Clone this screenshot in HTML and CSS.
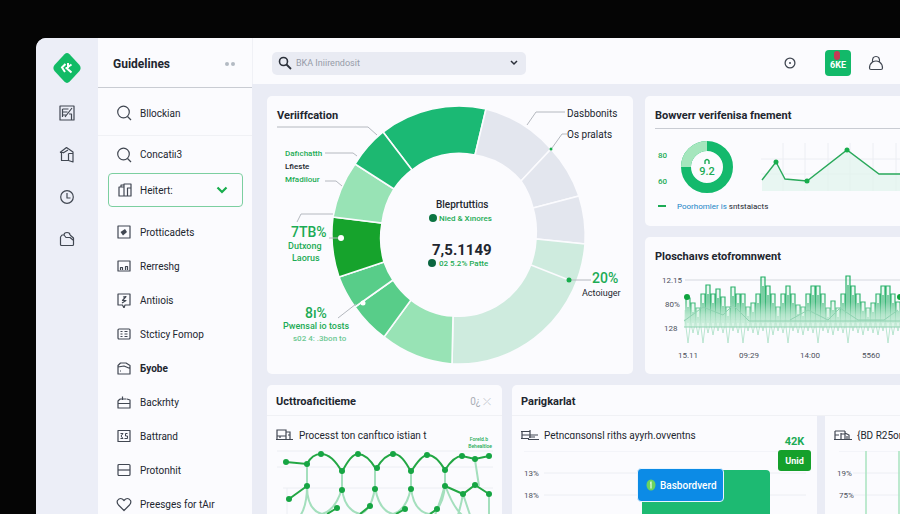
FILE: index.html
```html
<!DOCTYPE html>
<html lang="en">
<head>
  <meta charset="UTF-8">
  <meta name="viewport" content="width=device-width, initial-scale=1.0">
  <title>Guidelines</title>
  <link rel="stylesheet" href="styles.css">
</head>
<body>
  <div class="app">
    <!-- Icon rail -->
    <nav class="rail" aria-label="Main">
      <a class="logo" href="#" aria-label="Home">
        <svg width="30" height="32" viewBox="0 0 30 32"><path d="M12.500 2.200q2.500-2.200 5 0l10 10.800q2.200 3 0 6l-10 10.800q-2.500 2.200-5 0l-10-10.800q-2.200-3 0-6z" fill="#12bb66"/><path d="M13.500 12L10 15.500l3 4.500M19.500 12.500l-5 3.500 5 4.500M16 11v5" fill="none" stroke="#fff" stroke-width="2"/></svg>
      </a>
      <a href="#" aria-label="Notes"><svg class="icon" viewBox="0 0 16 16"><path d="M1 1h14v14H1zM3.500 4h6M3.500 7h5M3.500 10h4M3.500 4v8M13 3L6 12M10 9h2.500v6"/></svg></a>
      <a href="#" aria-label="Packages"><svg class="icon" viewBox="0 0 16 16"><path d="M1 5.500L7.500.5 14 5v10l-4.500-1.500h-7v-8M1 5.500h4M4 6l5-3M9.500 6.500v7M9.500 6.500H14"/></svg></a>
      <a href="#" aria-label="History"><svg class="icon" viewBox="0 0 16 16"><circle cx="8" cy="8" r="6.300"/><path d="M8 4v5h3.500"/></svg></a>
      <a href="#" aria-label="Files"><svg class="icon" viewBox="0 0 16 16"><path d="M5 4H3L1.500 6v7.500q0 1 1 1h11q1 0 1-1V7L11 4M5 4q0-2.500 3-2.500T11 4M5 4l2 2.500h4l3 2.500"/></svg></a>
    </nav>

    <!-- Sidebar -->
    <aside class="sidebar">
      <div class="sidebar-head">
        <h1>Guidelines</h1>
        <button class="more" aria-label="More"><i></i><i></i></button>
      </div>
      <nav class="menu" aria-label="Guidelines">
        <a class="tall" href="#"><svg class="icon" viewBox="0 0 16 16"><circle cx="7.500" cy="7" r="5.800"/><path d="M11.500 11.500L15 15"/></svg>Bllockian</a>
        <a class="mid" href="#"><svg class="icon" viewBox="0 0 16 16"><circle cx="7.500" cy="7" r="5.800"/><path d="M11.500 11.500L15 15"/></svg>Concatiı3</a>
        <div class="picker">
          <svg class="icon" viewBox="0 0 16 16"><path d="M2 5h5v9H2zM7 5V2h7v12H7M10.500 14V6H14M4 5V3h3"/></svg>
          <select aria-label="Section"><option>Heitert:</option></select>
          <svg class="picker-arrow" width="12" height="8" viewBox="0 0 12 8"><path d="M1.500 1.500L6 6l4.500-4.500" fill="none" stroke="#17ad4c" stroke-width="2.200"/></svg>
        </div>
        <a href="#"><svg class="icon" viewBox="0 0 16 16"><path d="M2 2h12v12H2z"/><path d="M4.500 8L9 5l2 3-4 3.500z" fill="#414752" stroke="none"/></svg>Protticadets</a>
        <a href="#"><svg class="icon" viewBox="0 0 16 16"><path d="M2 3h12v10H2zM4.500 12V9.500h2V12M9.500 12V8.500h2V12"/></svg>Rerreshg</a>
        <a href="#"><svg class="icon" viewBox="0 0 16 16"><path d="M2 2h12v11H9l-1 3-1.500-3H2zM7 5l3-.5-3.500 4H10L6 11"/></svg>Antiıois</a>
        <a href="#"><svg class="icon" viewBox="0 0 16 16"><rect x="2" y="3" width="12" height="10" rx="1"/><path d="M4.500 5.500h2M8.500 5.500h3M4.500 8h2M8.500 8h3M4.500 10.500h2M8.500 10.500h3"/></svg>Stcticy Fomop</a>
        <a class="strong" href="#"><svg class="icon" viewBox="0 0 16 16"><path d="M2 5.500V14h12V5.500L10 3H4.500zM2 7l6-1 6 2.500M4 11h1"/></svg>Бyobe</a>
        <a href="#"><svg class="icon" viewBox="0 0 16 16"><path d="M4 5L2 7v7h12V6l-3-1M2 9.500h12M6.500 6V2.500M4 5h6.500"/></svg>Backrhty</a>
        <a href="#"><svg class="icon" viewBox="0 0 16 16"><path d="M2 2.500h12v11H2z"/><path d="M4.500 5.500H7L5 8l2 2.500H4.500M11.500 5.500H9.500V8h2v2.500h-3" stroke-width="1"/></svg>Battrand</a>
        <a href="#"><svg class="icon" viewBox="0 0 16 16"><rect x="2" y="2.500" width="12" height="11" rx="1"/><path d="M2 8h12"/></svg>Protonhit</a>
        <a href="#"><svg class="icon" viewBox="0 0 16 16"><path d="M8 14.500L2.500 9Q.5 6.500 1.500 4.500 4.500.5 8 4.500q3.500-4 6.500 0 1 2-1 4.500z"/></svg>Preesges for tAır</a>
      </nav>
    </aside>

    <main class="main">
      <header class="topbar">
        <div class="search">
          <svg width="14" height="14" viewBox="0 0 14 14"><circle cx="5.500" cy="5.500" r="4" fill="none" stroke="#2b303a" stroke-width="1.600"/><path d="M8.500 8.500l4.500 4.500" stroke="#2b303a" stroke-width="1.800"/></svg>
          <input type="text" placeholder="BKA Iniirendosit" aria-label="Search">
          <button aria-label="Search options"><svg width="8" height="6" viewBox="0 0 8 6"><path d="M1 1l3 3 3-3" fill="none" stroke="#2b303a" stroke-width="1.500"/></svg></button>
        </div>
        <button class="status" aria-label="Status"><svg width="12" height="12" viewBox="0 0 12 12"><circle cx="6" cy="6" r="4.900" fill="none" stroke="#414752" stroke-width="1.300"/><path d="M5 6h2" stroke="#414752" stroke-width="1.300"/></svg></button>
        <button class="account">6KE<i></i></button>
        <button class="profile" aria-label="Profile"><svg class="icon" viewBox="0 0 16 16"><path d="M4.500 7Q4 1.500 8 1.500T11.500 7M4.500 7q2-1 3.500-1t3.500 1M4.500 7Q1.500 9 1.500 13q0 1.500 1.500 1.500h10q1.500 0 1.500-1.500 0-4-3-6"/></svg></button>
      </header>

      <div class="content">
        <div class="row row-top">
          <section class="card verify">
            <h2>Veriiffcation</h2>
            <svg class="chart" viewBox="0 0 366 278">
              <!-- Donut segments, clockwise from the top -->
              <g stroke="#fbfbfe" stroke-width="1.600">
                <path fill="#1bb974" d="M116 36A127 130 0 0 1 219 13L208 59A77 81 0 0 0 145 74z"/>
                <path fill="#e3e6ee" d="M219 13A127 130 0 0 1 284 53L254 85A77 81 0 0 0 208 59z"/>
                <path fill="#e3e6ee" d="M284 53A127 130 0 0 1 312 100L266 112A77 81 0 0 0 254 85z"/>
                <path fill="#e3e6ee" d="M312 100A127 130 0 0 1 318 148L269 143A77 81 0 0 0 266 112z"/>
                <path fill="#ceebde" d="M318 148A127 130 0 0 1 185 268L186 220A77 81 0 0 0 269 143z"/>
                <path fill="#98e3b5" d="M185 268A127 130 0 0 1 117 241L144 204A77 81 0 0 0 186 220z"/>
                <path fill="#58cd89" d="M117 241A127 130 0 0 1 88 211L126 184A77 81 0 0 0 144 204z"/>
                <path fill="#58cd89" d="M88 211A127 130 0 0 1 72 181L117 166A77 81 0 0 0 126 184z"/>
                <path fill="#16a32c" d="M72 181A127 130 0 0 1 66 121L115 127A77 81 0 0 0 117 166z"/>
                <path fill="#98e3b5" d="M66 121A127 130 0 0 1 88 68L127 93A77 81 0 0 0 115 127z"/>
                <path fill="#1db871" d="M88 68A127 130 0 0 1 116 36L145 74A77 81 0 0 0 127 93z"/>
                <path d="M264 169l38 15"/>
              </g>
              <!-- Leader lines -->
              <path class="leader" d="M10 31h91l9 8M58 57h28l4 3M58 85h11l6 5M30 126l4-8h32M62 142h11M71 222l18-14M260 29l9-13h29M285 52l10-14h5M302 184h22"/>
              <circle cx="74" cy="142" r="3" fill="#fff"/>
              <circle cx="96" cy="207" r="2.500" fill="#fff"/>
              <circle cx="284" cy="53" r="1.500" fill="#17ad4c"/>
              <circle cx="302" cy="184" r="2.500" fill="#17ad4c"/>
              <g class="green bold" font-size="8">
                <text x="18" y="60">Dafıchatth</text>
                <text class="dark" x="18" y="73">Lfieste</text>
                <text x="18" y="86">Mfadilour</text>
                <text class="big" x="24" y="141">7TB%</text>
                <text x="21" y="153" font-size="9">Dutxong</text>
                <text x="25" y="165" font-size="9">Laorus</text>
                <text class="big" x="38" y="222">8ı%</text>
                <text x="16" y="233" font-size="9">Pwensal io tosts</text>
                <text class="pale" x="26" y="245">s02 4: .3bon to</text>
                <text class="big" x="325" y="187">20%</text>
              </g>
              <g class="dark" font-size="10">
                <text x="300" y="21">Dasbbonits</text>
                <text x="300" y="42">Os pralats</text>
                <text x="315" y="200" font-size="9">Actoiuger</text>
              </g>
              <!-- Centre totals -->
              <text class="dark bold" x="169" y="112" font-size="10">Bleprtuttiɑs</text>
              <text class="green bold" x="172" y="125" font-size="8">Nied &amp; Xınores</text>
              <text class="dark total" x="165" y="159">7,5.1149</text>
              <text class="green bold" x="172" y="170" font-size="8">02 5.2% Patte</text>
              <circle cx="166" cy="122" r="4" fill="#0b7442"/>
              <circle cx="165" cy="167" r="4" fill="#0b6540"/>
            </svg>
          </section>

          <div class="stack">
            <section class="card bleed">
              <h2 class="ruled">Bowverr verifenisa fnement</h2>
              <svg class="chart" viewBox="0 0 255 66">
                <path class="grid" d="M138 14v48M160 14v48M183 14v48M205 14v48M228 14v48M251 14v48M116 30h139M116 45h139"/>
                <path fill="#dff3ec" fill-opacity=".7" d="M117 51l14-18 9 17 22 2 40-31 32 24h21v17H117z"/>
                <path fill="none" stroke="#2aa95b" stroke-width="1.400" d="M117 51l14-18 9 17 22 2 40-31 32 24h21"/>
                <g fill="#17ad4c"><circle cx="131" cy="33" r="2.500"/><circle cx="162" cy="52" r="2.500"/><circle cx="202" cy="21" r="2.500"/></g>
                <circle cx="62" cy="38" r="21" fill="none" stroke="#14b96c" stroke-width="10"/>
                <path d="M41 38A21 21 0 0 1 62 17" fill="none" stroke="#a5e6bd" stroke-width="10"/>
                <g class="green bold" font-size="8">
                  <text x="13" y="29">80</text>
                  <text x="13" y="55">60</text>
                </g>
                <path d="M60 35v-3q2-3 4 0v3" fill="none" stroke="#1cab55" stroke-width="1.400"/>
                <text class="green bold" x="62" y="46" text-anchor="middle" font-size="11">9.2</text>
              </svg>
              <p class="legend"><i></i><a href="#">Poorhomler is</a>&nbsp;sntstaiacts</p>
            </section>

            <section class="card bleed">
              <h2>Ploschaıvs etofromnwent</h2>
              <svg class="chart" viewBox="0 4 255 105">
                <path class="grid line" d="M40 15h215"/>
                <g id="load"></g>
                <circle cx="42" cy="32" r="3" fill="#0fa33e"/>
                <circle cx="255" cy="32" r="3" fill="#0fa33e"/>
                <g class="axis">
                  <text x="17" y="18">12.15</text>
                  <text x="20" y="42">80%</text>
                  <text x="19" y="66">128</text>
                  <text x="33" y="93">15.11</text>
                  <text x="94" y="93">09:29</text>
                  <text x="155" y="93">14:00</text>
                  <text x="217" y="93">5560</text>
                </g>
              </svg>
            </section>
          </div>
        </div>

        <div class="row row-bottom">
          <section class="card flow">
            <div class="card-head">
              <h2>Ucttroafıcitieme</h2>
              <span class="meta">0¿ ⤫</span>
            </div>
            <h3><svg width="18" height="12" viewBox="0 0 18 12"><path d="M1 10V1h9v9M1 7h9M4 7v2M10 3h4v7M12 6h2M0 10.500h17"/></svg>Processt ton canftıco istian t</h3>
            <svg class="chart" viewBox="0 3 235 80">
              <path class="grid" d="M10 3h216M10 19h216M16 40h210M20 40v30"/>
              <path d="M40 16v22q0 24 15 28 14-4 20-26V23M40 38q0 20-7 30M75 40q2 22 18 26 12-4 15-27V20M108 39q4 24 18 27 14-4 18-27V23M144 39q2 24 18 27 14-4 16-29V22M178 37q-4 15-10 30M208 12l4 26M178 37q8 22 17 30M196 46q-2 12-6 24M196 46q4 12 8 24M222 46v24" fill="none" stroke="#a4dfbd" stroke-width="2"/>
              <path d="M19 14l21 2Q45 6 54 6 65 6 75 24 84 6 91 6q9 0 18 15Q118 6 127 6q8 0 17 18Q154 7 161 7q8 0 17 15 9-14 17-14l13 3 14-3M22 51l18-13M178 38l18 8 12-9 14 9M60 66l10-6M93 66l10-8M129 66l9-5M163 66l7-5" fill="none" stroke="#23a744" stroke-width="2"/>
              <g id="flow-dots" fill="#16a543"></g>
              <g class="tiny green bold" text-anchor="end"><text x="221" y="-7">Foreld.b</text><text x="225" y="0">Behealtloe</text></g>
            </svg>
          </section>

          <section class="group">
            <div class="card-head">
              <h2>Parigkarlat</h2>
            </div>
            <div class="panels">
              <div class="panel">
                <h3><svg width="18" height="12" viewBox="0 0 18 12"><path d="M0 2.500h9M1 2v7M1 6h16M9 1v8M0 9.500h8M8 8h6M7 10.500h11"/></svg>Petncɑnsonsl riths ayyrh.ovventns</h3>
                <svg class="chart" viewBox="0 0 305 80">
                  <path class="grid" d="M12 0h282M32 22h262M32 44h262"/>
                  <path fill="#1dba72" d="M130 80V19h124q4 0 4 4v57z"/>
                  <g class="axis"><text x="12" y="25">13%</text><text x="12" y="47">18%</text></g>
                </svg>
                <button class="tip"><svg width="10" height="12" viewBox="0 0 10 12"><ellipse cx="5" cy="6" rx="4.500" ry="5.500" fill="#6bd35f"/><path d="M5 2.500v7M4 4h1" stroke="#e7ffe8" stroke-width="1.200"/></svg>Basbordverd</button>
                <div class="badge"><span>42K</span><button>Unid</button></div>
              </div>
              <div class="panel side">
                <h3><svg width="18" height="12" viewBox="0 0 18 12"><path d="M1 2h10M1 2v8M1 6h4M7 4v6M7 5h4M11 2v8M11 4l4 2v4M0 10.500h18M13 7v3"/></svg>{BD R25on</h3>
                <svg class="chart" viewBox="0 0 75 80">
                  <path class="grid" d="M14 0h61M28 22h47M28 44h47"/>
                  <path d="M41 0v80M74 0v80" stroke="#a9e3c0" stroke-width="1.500"/>
                  <g class="axis"><text x="12" y="25">19%</text><text x="14" y="47">75%</text></g>
                </svg>
              </div>
            </div>
          </section>
        </div>
      </div>
    </main>
  </div>

  <script>
    // Top of each column in the load chart, left to right
    const tops = [33, 38, 43, 29, 20, 29, 24, 32, 42, 22, 29, 29, 42, 38, 29, 12, 21, 29, 42,
      29, 21, 29, 40, 42, 29, 21, 21, 29, 43, 36, 43, 29, 11, 21, 29, 37, 43, 38, 29, 21, 21, 29, 37, 36];
    // Columns that run down into a spike
    const spikes = [0, 3, 8, 11, 16, 20, 26, 32, 40];
    let bars = '';
    let down = '';
    tops.forEach(function (top, i) {
      const x = 41 + i * 5;
      bars += 'M' + x + ' 62V' + top + 'h4V62M' + (x + 2) + ' ' + (top + 9) + 'V58';
      const end = spikes.includes(i) ? 78 : 66 + (i % 3) * 2;
      down += 'M' + (x - 1) + ' 54L' + (x + 2) + ' ' + end + 'L' + (x + 5) + ' 54';
    });
    document.getElementById('load').innerHTML =
      '<linearGradient id="fade" gradientUnits="userSpaceOnUse" x1="0" y1="12" x2="0" y2="62">' +
      '<stop offset="0" stop-color="#1fae63"/><stop offset=".5" stop-color="#3bb777"/><stop offset=".75" stop-color="#9adbb9"/><stop offset="1" stop-color="#d0efdf"/></linearGradient>' +
      '<path d="M39 45h216v17H39z" fill="#e2f6ec"/>' +
      '<path d="' + down + '" fill="none" stroke="#a9dfc5" stroke-width=".8"/>' +
      '<path d="' + bars + '" fill="#d3f2e1" fill-opacity=".4" stroke="url(#fade)" stroke-width="1.200"/>' +
      '<path d="M39 56L58 42 78 50 88 40 104 56H255M39 62h216M145 55l18-10 20 10 12-12 18 12h26l14-10" fill="none" stroke="#8fd2b1"/>';

    // Nodes of the flow chart
    const dots = [[19, 14], [40, 16], [54, 6], [75, 23], [91, 6], [110, 20], [126, 6], [144, 23], [160, 7],
      [178, 22], [195, 8], [208, 11], [222, 8], [22, 51], [40, 38], [75, 42], [108, 41], [144, 41],
      [178, 38], [196, 46], [208, 37], [222, 46], [70, 60], [103, 58], [138, 61], [170, 61]];
    document.getElementById('flow-dots').innerHTML = dots.map(function (d) {
      return '<circle cx="' + d[0] + '" cy="' + d[1] + '" r="3"/>';
    }).join('');
  </script>
</body>
</html>
```
FILE: styles.css
```css
* {
  box-sizing: border-box;
}
body {
  margin: 0;
  height: 100vh;
  padding: 38px 0 0 36px;
  overflow: hidden;
  background-color: #050505;
  color: #22262f;
  font-family: Roboto, "Liberation Sans", sans-serif;
  font-size: 10px;
}
h1, h2, h3, p {
  margin: 0;
}
a {
  color: inherit;
  text-decoration: none;
}
button {
  padding: 0;
  border: none;
  background: none;
  color: inherit;
  font: inherit;
  cursor: pointer;
}
svg {
  display: block;
  flex-shrink: 0;
}
.icon {
  width: 16px;
  height: 16px;
  fill: none;
  stroke: #414752;
  stroke-width: 1.2;
  stroke-linejoin: round;
}
.app {
  display: flex;
  height: 100%;
  overflow: hidden;
  border-radius: 10px 0 0 0;
  background-color: #eaecf5;
}

/* Icon rail */
.rail {
  display: flex;
  flex-direction: column;
  align-items: center;
  gap: 26px;
  width: 62px;
  padding-top: 14px;
  background-color: #eceef7;
}
.rail .logo {
  margin-bottom: -5px;
}

/* Sidebar */
.sidebar {
  width: 154px;
  background-color: #fbfbfe;
}
.sidebar-head {
  display: flex;
  align-items: center;
  justify-content: space-between;
  height: 50px;
  padding: 2px 17px 0 15px;
  border-bottom: 1px solid #c9ccd3;
}
h1 {
  font-size: 12px;
  font-weight: 700;
}
.more {
  display: flex;
  gap: 2px;
}
.more i {
  width: 4px;
  height: 4px;
  border-radius: 50%;
  background-color: #b3bac3;
}
.menu a {
  display: flex;
  align-items: center;
  gap: 8px;
  height: 34px;
  padding-left: 18px;
  white-space: nowrap;
}
.menu .tall {
  height: 48px;
  padding-top: 3px;
  border-bottom: 1px solid #f0f1f5;
}
.menu .mid {
  height: 37px;
}
.menu .strong {
  font-weight: 700;
}
.picker {
  display: grid;
  align-items: center;
  height: 34px;
  margin: 0 9px 8px 10px;
  border: 1px solid #7ccfa0;
  border-radius: 4px;
}
.picker > * {
  grid-area: 1 / 1;
}
.picker .icon {
  margin-left: 8px;
}
.picker select {
  width: 100%;
  height: 32px;
  padding: 0 28px 0 31px;
  border: none;
  appearance: none;
  background: none;
  color: inherit;
  font: inherit;
}
.picker-arrow {
  justify-self: end;
  margin-right: 14px;
}

/* Top bar */
.main {
  flex: 1;
  min-width: 0;
}
.topbar {
  display: flex;
  align-items: center;
  height: 46px;
  padding: 4px 16px 0 19px;
  border-left: 1px solid #f0f1f6;
  background-color: #fbfbfe;
}
.search {
  display: flex;
  align-items: center;
  width: 254px;
  height: 23px;
  margin-right: auto;
  padding: 0 8px 0 6px;
  border-radius: 5px;
  background-color: #e9ebf3;
}
.search input {
  flex: 1;
  min-width: 0;
  padding: 0 4px;
  border: none;
  background: none;
  color: #22262f;
  font: inherit;
  font-size: 9px;
}
.search input::placeholder {
  color: #969ba8;
}
.status {
  margin-right: 29px;
}
.account {
  position: relative;
  width: 26px;
  height: 26px;
  margin-right: 17px;
  padding-top: 4px;
  border-radius: 4px;
  background-color: #12b969;
  color: #fff;
  font-size: 9px;
  font-weight: 700;
}
/* Notification mark over the account button */
.account i {
  position: absolute;
  top: 1px;
  left: 9px;
  width: 6px;
  height: 9px;
  border-radius: 3px;
  background-color: #c63a55;
}

/* Cards */
.content {
  padding: 12px 0 0 15px;
}
.row {
  display: grid;
}
.row-top {
  grid-template-columns: 366fr 255fr;
  gap: 12px;
  margin-bottom: 11px;
}
.row-bottom {
  grid-template-columns: 235fr 388fr;
  gap: 10px;
}
.stack {
  display: flex;
  flex-direction: column;
  gap: 11px;
}
.card {
  border-radius: 5px;
  background-color: #fbfbfe;
}
.bleed {
  border-radius: 5px 0 0 5px;
}
h2 {
  padding: 8px 10px 0;
  font-size: 11px;
  font-weight: 700;
  line-height: 24px;
}
.ruled {
  margin-left: 10px;
  padding-left: 0;
  border-bottom: 1px solid #c9ccd3;
}
.verify {
  display: grid;
}
.verify > * {
  grid-area: 1 / 1;
}
.chart {
  width: 100%;
  height: auto;
}
.grid {
  fill: none;
  stroke: #eceef3;
}
.grid.line {
  stroke: #d5d8df;
}
.leader {
  fill: none;
  stroke: #b4b8bf;
}
.green {
  fill: #1cab55;
}
.pale {
  fill: #6cc892;
}
.dark {
  fill: #22262f;
}
.bold {
  font-weight: 500;
}
.big {
  font-size: 14px;
  font-weight: 500;
}
.total {
  font-size: 15px;
  font-weight: 700;
}
.tiny {
  font-size: 5px;
}
.axis {
  fill: #4b505b;
  font-size: 8px;
}
.legend {
  display: flex;
  align-items: center;
  height: 31px;
  padding: 0 0 9px 13px;
  font-size: 8px;
}
.legend i {
  width: 8px;
  height: 2px;
  margin-right: 11px;
  background-color: #1cab55;
}
.legend a {
  color: #1a84c6;
}

/* Bottom row */
.flow .chart {
  overflow: visible;
}
.card-head {
  display: flex;
  align-items: center;
  justify-content: space-between;
  height: 31px;
  padding-top: 3px;
  border-bottom: 1px solid #f0f1f5;
}
.card-head h2 {
  padding: 0 9px;
}
.meta {
  padding-right: 11px;
  color: #a9adb6;
}
h3 {
  display: flex;
  align-items: center;
  gap: 5px;
  height: 35px;
  padding: 3px 0 0 9px;
  font-size: 10px;
  font-weight: 400;
  white-space: nowrap;
}
h3 svg {
  fill: none;
  stroke: #414752;
  stroke-width: 1.2;
}
.group .card-head {
  border-radius: 5px 0 0 0;
  background-color: #fbfbfe;
}
.panels {
  display: grid;
  grid-template-columns: 305fr 75fr;
  gap: 8px;
}
.panel {
  position: relative;
  min-width: 0;
  background-color: #fbfbfe;
}
/* Tooltip and badge lie over the bar chart */
.tip {
  position: absolute;
  top: 52px;
  left: 125px;
  display: flex;
  align-items: center;
  gap: 4px;
  height: 34px;
  padding: 0 6px 0 8px;
  border: 1px solid #e8f5ff;
  border-radius: 4px;
  background-color: #0c8be6;
  color: #fff;
  font-weight: 500;
}
.badge {
  position: absolute;
  top: 19px;
  right: 6px;
  display: flex;
  flex-direction: column;
  align-items: center;
  gap: 2px;
  color: #1cab55;
  font-size: 11px;
  font-weight: 700;
}
.badge button {
  width: 33px;
  height: 21px;
  border-radius: 3px;
  background-color: #15a02b;
  color: #fff;
  font-size: 9px;
}
```
